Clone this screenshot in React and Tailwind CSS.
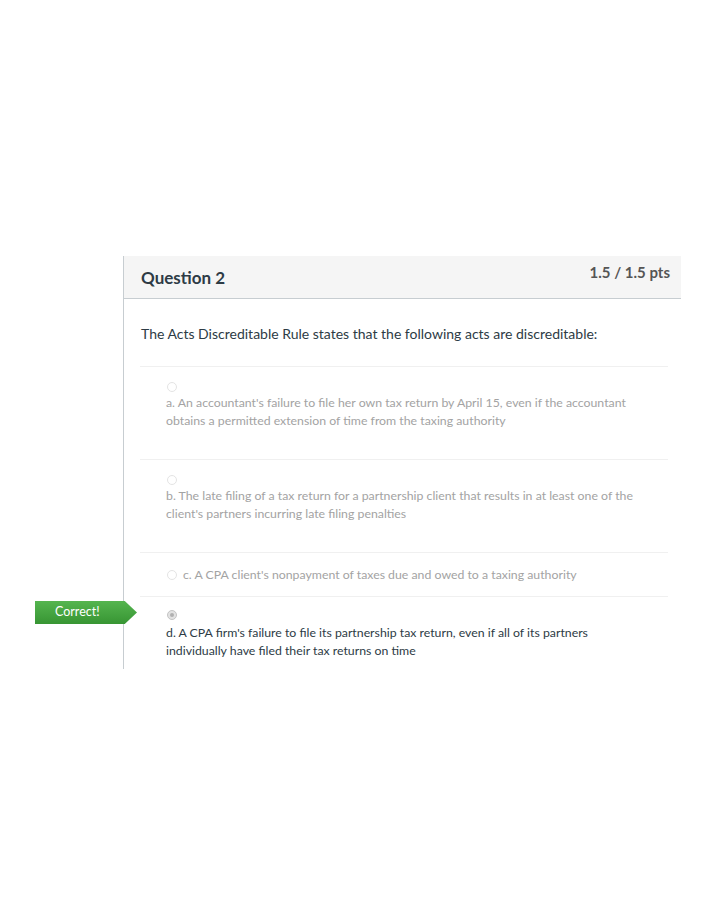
import React from 'react';

const answers = [
  {
    id: 'a',
    lines: [
      "a. An accountant's failure to file her own tax return by April 15, even if the accountant",
      'obtains a permitted extension of time from the taxing authority',
    ],
  },
  {
    id: 'b',
    lines: [
      'b. The late filing of a tax return for a partnership client that results in at least one of the',
      "client's partners incurring late filing penalties",
    ],
  },
  {
    id: 'c',
    inline: true,
    lines: ["c. A CPA client's nonpayment of taxes due and owed to a taxing authority"],
  },
  {
    id: 'd',
    selected: true,
    lines: [
      "d. A CPA firm's failure to file its partnership tax return, even if all of its partners",
      'individually have filed their tax returns on time',
    ],
  },
];

const Radio = ({ checked }) => (
  <span
    className={`block w-[10px] h-[10px] rounded-full border shrink-0 ${
      checked ? 'border-[#c4c4c4] bg-[#e2e2e2]' : 'border-[#e4e4e4] bg-white'
    }`}
  >
    {checked && <span className="block w-[4px] h-[4px] rounded-full bg-[#b0b0b0] mx-auto mt-[2px]" />}
  </span>
);

const Answer = ({ answer }) => {
  const textColor = answer.selected ? 'text-[#2d3b45]' : 'text-[#a3a3a3]';

  if (answer.inline) {
    return (
      <div className="border-t border-[#f0f0f0] h-[44px] pl-[27px] flex items-center gap-[6px]">
        <Radio />
        <span className={`text-[12.3px] leading-[18px] ${textColor}`}>{answer.lines[0]}</span>
      </div>
    );
  }

  return (
    <div className={`relative border-t border-[#f0f0f0] pl-[26px] ${answer.selected ? 'pt-[13px] h-[73px]' : 'pt-[15px] pb-[29px]'}`}>
      {answer.selected && (
        <div className="absolute left-[-105px] top-[4px] w-[102px] h-[23px] bg-gradient-to-b from-[#55b54f] to-[#379533] [clip-path:polygon(0_0,88%_0,100%_50%,88%_100%,0_100%)] flex items-center pl-[20px] text-white text-[12.5px]">
          Correct!
        </div>
      )}
      <div className="pl-[1px]">
        <Radio checked={answer.selected} />
      </div>
      <div className={`${answer.selected ? 'mt-[4px]' : 'mt-[2px]'} text-[12.3px] leading-[18px] whitespace-nowrap ${textColor}`}>
        {answer.lines.map((line) => (
          <div key={line}>{line}</div>
        ))}
      </div>
    </div>
  );
};

export default function App() {
  return (
    <div className="min-h-[918px] bg-white font-['Lato','Open_Sans',sans-serif]">
      <div className="pt-[256px] pl-[123px] pr-[33px]">
        <div className="border-l border-[#c7cdd1]">
          {/* header */}
          <div className="h-[43px] bg-[#f5f5f5] border-b border-[#c7cdd1] flex justify-between pl-[17px] pr-[11px]">
            <h2 className="mt-[10px] text-[17px] leading-[24px] font-bold text-[#2d3b45]">Question 2</h2>
            <span className="mt-[6px] text-[15px] leading-[20px] font-bold text-[#555]">1.5 / 1.5 pts</span>
          </div>

          <div className="pt-[25px] pl-[17px] text-[14px] leading-[20px] text-[#2d3b45]">
            The Acts Discreditable Rule states that the following acts are discreditable:
          </div>

          <div className="mt-[22px] ml-[16px] mr-[13px]">
            {answers.map((a) => (
              <Answer key={a.id} answer={a} />
            ))}
          </div>
        </div>
      </div>
    </div>
  );
}
